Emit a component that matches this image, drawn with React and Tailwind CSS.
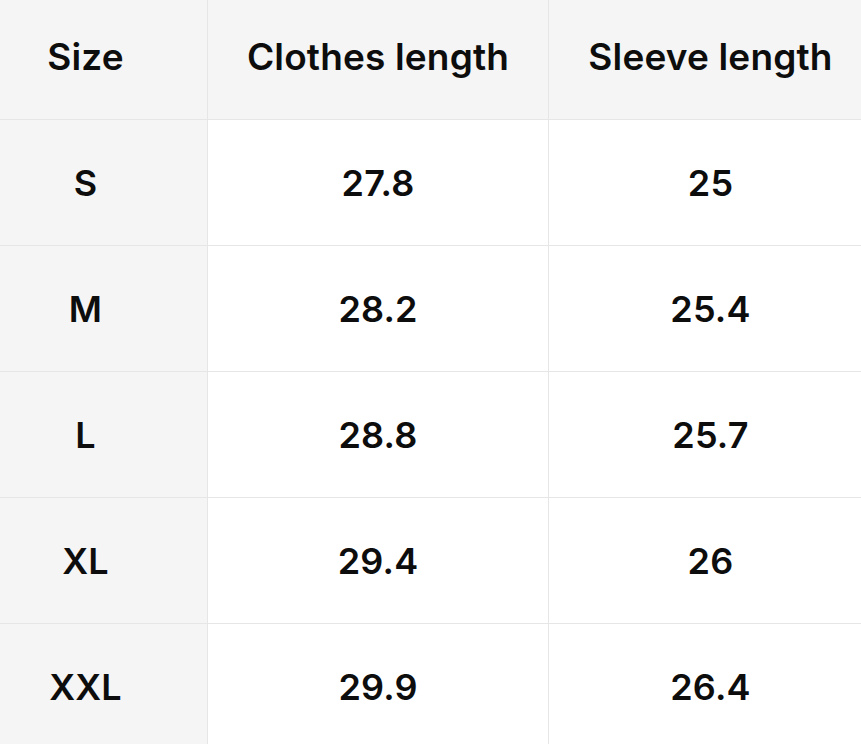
import React from 'react';

const rows = [
  ['S', '27.8', '25'],
  ['M', '28.2', '25.4'],
  ['L', '28.8', '25.7'],
  ['XL', '29.4', '26'],
  ['XXL', '29.9', '26.4'],
];

export default function App() {
  return (
    <div
      className="w-[861px] h-[744px] overflow-hidden bg-white text-[#0d0d0d] font-semibold tracking-[0.01em]"
      style={{ fontFamily: 'Inter, "Noto Sans", sans-serif' }}
    >
      <div className="grid grid-cols-[208px_341px_312px]">
        {/* header */}
        <div className="h-[120px] flex items-center justify-center pr-[36px] pb-[6px] bg-[#f5f5f5] border-r border-b border-[#e6e6e6] text-[37px]">
          Size
        </div>
        <div className="h-[120px] flex items-center justify-center pb-[6px] bg-[#f5f5f5] border-r border-b border-[#e6e6e6] text-[37px]">
          Clothes length
        </div>
        <div className="h-[120px] flex items-center justify-center pl-[11px] pb-[6px] bg-[#f5f5f5] border-b border-[#e6e6e6] text-[37px]">
          Sleeve length
        </div>

        {rows.map((r) => (
          <React.Fragment key={r[0]}>
            <div className="h-[126px] flex items-center justify-center pr-[36px] bg-[#f5f5f5] border-r border-b border-[#e6e6e6] text-[36px]">
              {r[0]}
            </div>
            <div className="h-[126px] flex items-center justify-center bg-white border-r border-b border-[#e6e6e6] text-[36px]">
              {r[1]}
            </div>
            <div className="h-[126px] flex items-center justify-center pl-[11px] bg-white border-b border-[#e6e6e6] text-[36px]">
              {r[2]}
            </div>
          </React.Fragment>
        ))}
      </div>
    </div>
  );
}
